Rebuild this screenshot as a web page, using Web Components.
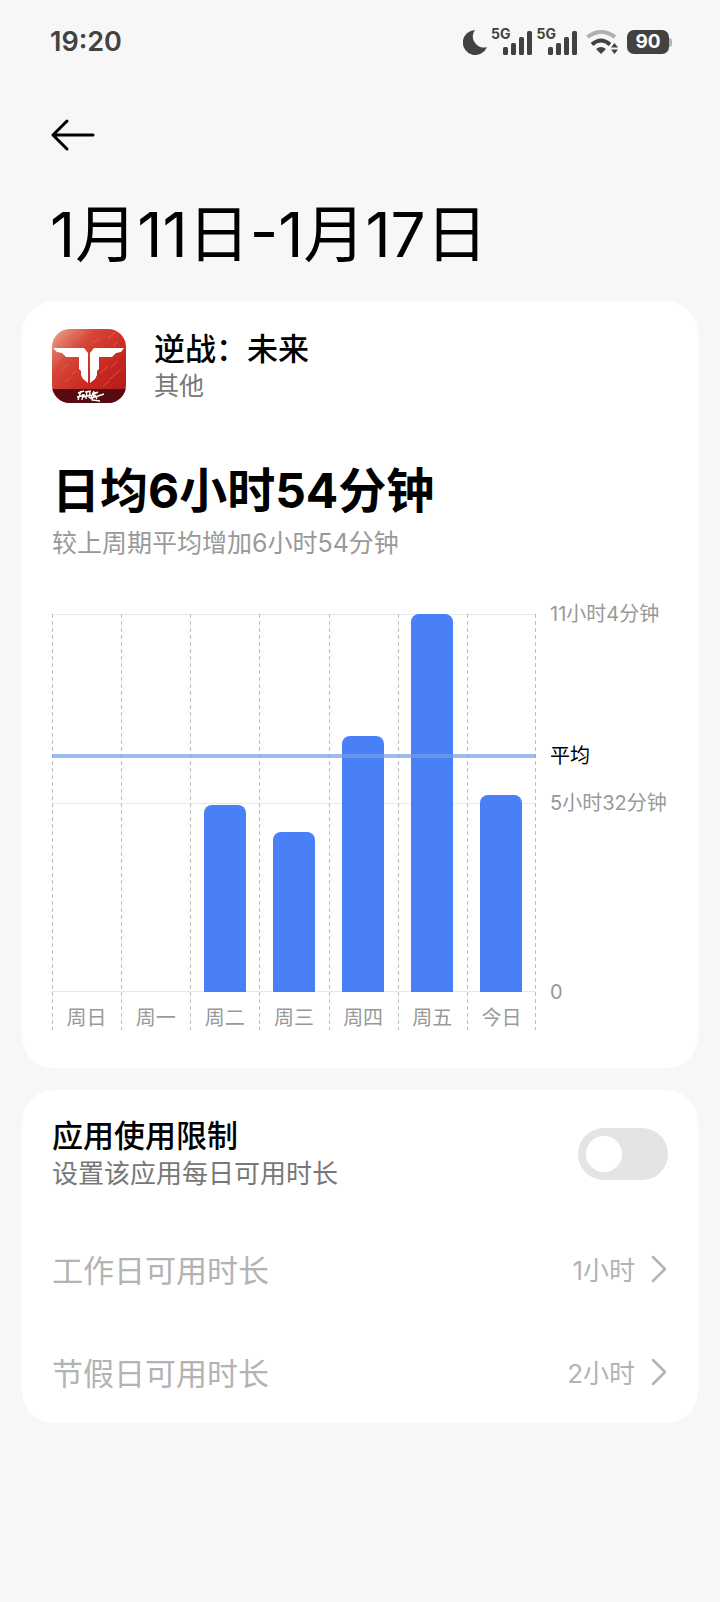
<!DOCTYPE html>
<html lang="zh-CN">
<head>
<meta charset="utf-8">
<meta name="viewport" content="width=device-width, initial-scale=1">
<title>1月11日-1月17日</title>
<style>
    body {
        margin: 0;
        background: #f7f7f7;
        color: #000;
        font-family: Inter, "Noto Sans CJK SC", sans-serif;
    }
</style>
</head>
<body>
<usage-page>
    <status-bar slot="status" time="19:20" battery="90"></status-bar>
    <page-header slot="header">1月11日-1月17日</page-header>
    <ui-card>
        <app-summary>
            <app-icon slot="icon"></app-icon>
            <span slot="name">逆战：未来</span>
            <span slot="category">其他</span>
            <span slot="total">日均6小时54分钟</span>
            <span slot="trend">较上周期平均增加6小时54分钟</span>
        </app-summary>
        <usage-chart>
            <usage-bar label="周日" value="0"></usage-bar>
            <usage-bar label="周一" value="0"></usage-bar>
            <usage-bar label="周二" value="328"></usage-bar>
            <usage-bar label="周三" value="281"></usage-bar>
            <usage-bar label="周四" value="449"></usage-bar>
            <usage-bar label="周五" value="664"></usage-bar>
            <usage-bar label="今日" value="346"></usage-bar>
            <span slot="max">11小时4分钟</span>
            <span slot="average">平均</span>
            <span slot="half">5小时32分钟</span>
            <span slot="zero">0</span>
        </usage-chart>
    </ui-card>
    <ui-card>
        <limit-switch>
            应用使用限制
            <span slot="hint">设置该应用每日可用时长</span>
        </limit-switch>
        <limit-row>工作日可用时长<span slot="value">1小时</span></limit-row>
        <limit-row>节假日可用时长<span slot="value">2小时</span></limit-row>
    </ui-card>
</usage-page>

<script>
class BaseElement extends HTMLElement {
    constructor() {
        super();
        this.attachShadow({mode: 'open'});
    }
    connectedCallback() {
        this.shadowRoot.innerHTML = `<style>
        *, *::before, *::after { box-sizing: border-box; }
        :host { display: block; }
        ${this.style_}</style>${this.template}`;
    }
}

class UsagePage extends BaseElement {
    get style_() {
        return `
        main {
            display: flex;
            flex-direction: column;
            gap: 22px;
            padding: 0 22px 48px;
        }`;
    }
    get template() {
        return `<slot name="status"></slot>
        <slot name="header"></slot>
        <main><slot></slot></main>`;
    }
}
customElements.define('usage-page', UsagePage);

class StatusBar extends BaseElement {
    get style_() {
        return `
        :host {
            display: flex;
            justify-content: space-between;
            align-items: center;
            height: 84px;
            padding: 0 48px 0 50px;
            color: #424242;
        }
        time {
            font-size: 27px;
            line-height: 32px;
            font-weight: 600;
        }
        .icons {
            display: flex;
            align-items: center;
            gap: 8px;
        }
        .signals {
            display: flex;
            gap: 4px;
        }
        .signal {
            display: flex;
            align-items: flex-start;
        }
        .signal svg { margin-left: -9px; }
        .signal span {
            font-size: 14px;
            line-height: 10px;
            font-weight: 700;
        }
        svg { display: block; fill: #424242; }
        .battery {
            display: flex;
            align-items: center;
        }
        .battery b {
            width: 42px;
            border-radius: 7px;
            background: #424242;
            color: #fff;
            font-size: 19px;
            line-height: 24px;
            font-weight: 700;
            text-align: center;
        }
        .battery i {
            width: 3px;
            height: 9px;
            border-radius: 0 3px 3px 0;
            background: #b5b5b5;
        }`;
    }
    get signal() {
        return `<div class="signal"><span>5G</span>
        <svg width="31" height="26" viewBox="0 0 31 26">
            <rect x="1" y="18" width="5" height="8" rx="1.5"/>
            <rect x="9" y="14" width="5" height="12" rx="1.5"/>
            <rect x="17" y="8" width="5" height="18" rx="1.5"/>
            <rect x="25" y="2" width="5" height="24" rx="1.5"/>
        </svg></div>`;
    }
    get template() {
        return `<time>${this.getAttribute('time')}</time>
        <div class="icons">
            <div class="signals">
                <svg width="24" height="26" viewBox="0 0 24 26"><path d="M12 1A12.500 12.500 0 1 0 24 18A11 11 0 0 1 12 1Z"/></svg>
                ${this.signal}
                ${this.signal}
            </div>
            <svg width="33" height="26" viewBox="0 0 33 26">
                <path d="M1.500 8Q15 -2 29 8" fill="none" stroke="#b0b0b0" stroke-width="4"/>
                <path d="M6 15.500Q15 7.500 24 15.500" fill="none" stroke="#424242" stroke-width="4"/>
                <path d="M10 20Q15 16 20 20L15 25Z"/>
                <path d="M25 18.500L28.500 14L32 18.500ZM25 20.500H32L28.500 25Z"/>
            </svg>
            <div class="battery"><b>${this.getAttribute('battery')}</b><i></i></div>
        </div>`;
    }
}
customElements.define('status-bar', StatusBar);

class PageHeader extends BaseElement {
    get style_() {
        return `
        :host { padding: 32px 50px 28px; }
        button {
            display: block;
            padding: 0;
            border: 0;
            background: none;
        }
        svg { display: block; }
        h1 {
            margin: 45px 0 0;
            font-size: 62px;
            line-height: 76px;
            font-weight: 400;
            white-space: nowrap;
        }`;
    }
    get template() {
        return `<button type="button" aria-label="返回">
            <svg width="46" height="36" viewBox="0 0 46 36" fill="none" stroke="#000" stroke-width="3" stroke-linecap="round" stroke-linejoin="round">
                <path d="M17 5L3 19L17 33M3 19H43"/>
            </svg>
        </button>
        <h1><slot></slot></h1>`;
    }
}
customElements.define('page-header', PageHeader);

class UiCard extends BaseElement {
    get style_() {
        return `
        :host {
            border-radius: 32px;
            background: #fff;
            padding: 0 30px;
        }`;
    }
    get template() {
        return `<slot></slot>`;
    }
}
customElements.define('ui-card', UiCard);

class AppIcon extends BaseElement {
    get style_() {
        return `svg { display: block; }`;
    }
    get template() {
        return `<svg width="74" height="74" viewBox="0 0 74 74">
            <defs>
                <linearGradient id="red" x1="0" y1="0" x2="1" y2="1">
                    <stop offset="0" stop-color="#eea892"/>
                    <stop offset="0.300" stop-color="#d5483a"/>
                    <stop offset="0.600" stop-color="#cb2a22"/>
                    <stop offset="1" stop-color="#a81a18"/>
                </linearGradient>
                <clipPath id="round"><rect width="74" height="74" rx="18"/></clipPath>
            </defs>
            <g clip-path="url(#round)">
                <rect width="74" height="74" fill="url(#red)"/>
                <path d="M24 10L31 3M41 14L47 9M56 9L65 2M61 17L66 13M10 40L16 35M13 53L19 48M48 44L56 37M57 51L69 40M51 57L57 52M59 38L66 32M5 31L10 27M20 45L24 42" stroke="#e97763" stroke-width="1" opacity="0.600"/>
                <rect y="60" width="74" height="14" fill="#570b10"/>
                <path d="M1 19H32L36 24V54L31 50L29 46V42L27 40V28H14L10 24L5 23ZM72 19H42L38 24V54L43 50L45 46V42L47 40V28H60L64 24L69 23Z" fill="#fff"/>
                <path d="M26 64L32 62M25 68L33 66M29 62L26 71M33 63L39 62M31 65L30 71M35 62L34 70M38 63L37 69M31 68L39 66M42 62L38 70M40 66L46 63M43 63L40 71L48 72M39 69L46 67M43 66L45 70M46 67L52 65" fill="none" stroke="#fff" stroke-width="1.400"/>
            </g>
        </svg>`;
    }
}
customElements.define('app-icon', AppIcon);

class AppSummary extends BaseElement {
    get style_() {
        return `
        :host { padding-top: 28px; }
        .app {
            display: flex;
            align-items: center;
            gap: 28px;
        }
        .name {
            font-size: 31px;
            line-height: 40px;
            font-weight: 500;
        }
        .category {
            font-size: 25px;
            line-height: 34px;
            color: #777;
        }
        h2 {
            margin: 58px 0 0;
            font-size: 48px;
            line-height: 60px;
            font-weight: 700;
            white-space: nowrap;
        }
        p {
            margin: 4px 0 0;
            font-size: 25px;
            line-height: 36px;
            color: #999;
        }`;
    }
    get template() {
        return `<div class="app">
            <slot name="icon"></slot>
            <div>
                <div class="name"><slot name="name"></slot></div>
                <div class="category"><slot name="category"></slot></div>
            </div>
        </div>
        <h2><slot name="total"></slot></h2>
        <p><slot name="trend"></slot></p>`;
    }
}
customElements.define('app-summary', AppSummary);

// minutes at the top of the scale, and the level of the average line
const MAX = 664;
const AVERAGE = 414;

class UsageChart extends BaseElement {
    get style_() {
        return `
        :host {
            display: grid;
            grid-template-columns: 1fr 118px;
            column-gap: 14px;
            padding: 53px 0 38px;
            font-size: 20px;
            line-height: 28px;
            color: #999;
        }
        .plot {
            position: relative;
            display: grid;
            grid-template-columns: repeat(7, 1fr);
            --plot: 378px;
            background:
                linear-gradient(#e8e8e8, #e8e8e8) 0 0 / 100% 1px no-repeat,
                linear-gradient(#e8e8e8, #e8e8e8) 0 189px / 100% 1px no-repeat,
                linear-gradient(#e8e8e8, #e8e8e8) 0 377px / 100% 1px no-repeat;
        }
        .average {
            position: absolute;
            left: 0;
            right: 0;
            top: 140px;
            height: 4px;
            background: rgba(114, 158, 232, 0.700);
        }
        .axis {
            display: grid;
            height: 378px;
            grid-template-rows: ${MAX - AVERAGE}fr ${AVERAGE - MAX / 2}fr ${MAX / 2}fr 0;
            white-space: nowrap;
        }
        .axis div {
            display: flex;
            align-items: center;
            height: 0;
        }
        .axis .now { color: #000; }`;
    }
    get template() {
        return `<div class="plot"><slot></slot><div class="average"></div></div>
        <div class="axis">
            <div><slot name="max"></slot></div>
            <div class="now"><slot name="average"></slot></div>
            <div><slot name="half"></slot></div>
            <div><slot name="zero"></slot></div>
        </div>`;
    }
}
customElements.define('usage-chart', UsageChart);

class UsageBar extends BaseElement {
    get style_() {
        return `
        :host {
            --dash: repeating-linear-gradient(#bdbdbd 0 4px, transparent 4px 7px);
            background: var(--dash) 0 0 / 1px 100% no-repeat;
        }
        :host(:nth-of-type(7)) {
            background:
                var(--dash) 0 0 / 1px 100% no-repeat,
                var(--dash) 100% 0 / 1px 100% no-repeat;
        }
        .track {
            display: flex;
            align-items: flex-end;
            justify-content: center;
            height: var(--plot);
        }
        .bar {
            width: 42px;
            height: ${this.getAttribute('value') / MAX * 100}%;
            border-radius: 8px 8px 0 0;
            background: #4980f8;
        }
        .label {
            padding-top: 14px;
            line-height: 24px;
            text-align: center;
        }`;
    }
    get template() {
        return `<div class="track"><div class="bar"></div></div>
        <div class="label">${this.getAttribute('label')}</div>`;
    }
}
customElements.define('usage-bar', UsageBar);

class LimitSwitch extends BaseElement {
    get style_() {
        return `
        label {
            display: flex;
            align-items: center;
            justify-content: space-between;
            height: 127px;
        }
        .title {
            font-size: 31px;
            line-height: 40px;
            font-weight: 500;
        }
        .hint {
            font-size: 26px;
            line-height: 36px;
            color: #777;
        }
        input {
            appearance: none;
            flex: none;
            width: 90px;
            height: 52px;
            margin: 0;
            padding: 8px;
            border-radius: 26px;
            background: #e4e4e4;
        }
        input::before {
            content: "";
            display: block;
            width: 36px;
            height: 36px;
            border-radius: 50%;
            background: #fff;
        }
        input:checked { background: #4980f8; padding-left: 46px; }`;
    }
    get template() {
        return `<label>
            <div>
                <div class="title"><slot></slot></div>
                <div class="hint"><slot name="hint"></slot></div>
            </div>
            <input type="checkbox" role="switch">
        </label>`;
    }
}
customElements.define('limit-switch', LimitSwitch);

class LimitRow extends BaseElement {
    get style_() {
        return `
        button {
            display: flex;
            align-items: center;
            width: 100%;
            height: 103px;
            padding: 0;
            border: 0;
            background: none;
            font: inherit;
            font-size: 31px;
            color: #b3b3b3;
            text-align: left;
        }
        .title { flex: 1; }
        .value {
            margin-right: 16px;
            font-size: 26px;
        }
        svg { display: block; }`;
    }
    get template() {
        return `<button type="button" disabled>
            <span class="title"><slot></slot></span>
            <span class="value"><slot name="value"></slot></span>
            <svg width="17" height="28" viewBox="0 0 17 28" fill="none" stroke="#b3b3b3" stroke-width="2.500" stroke-linecap="round" stroke-linejoin="round">
                <path d="M2 2L14 14L2 26"/>
            </svg>
        </button>`;
    }
}
customElements.define('limit-row', LimitRow);
</script>
</body>
</html>
